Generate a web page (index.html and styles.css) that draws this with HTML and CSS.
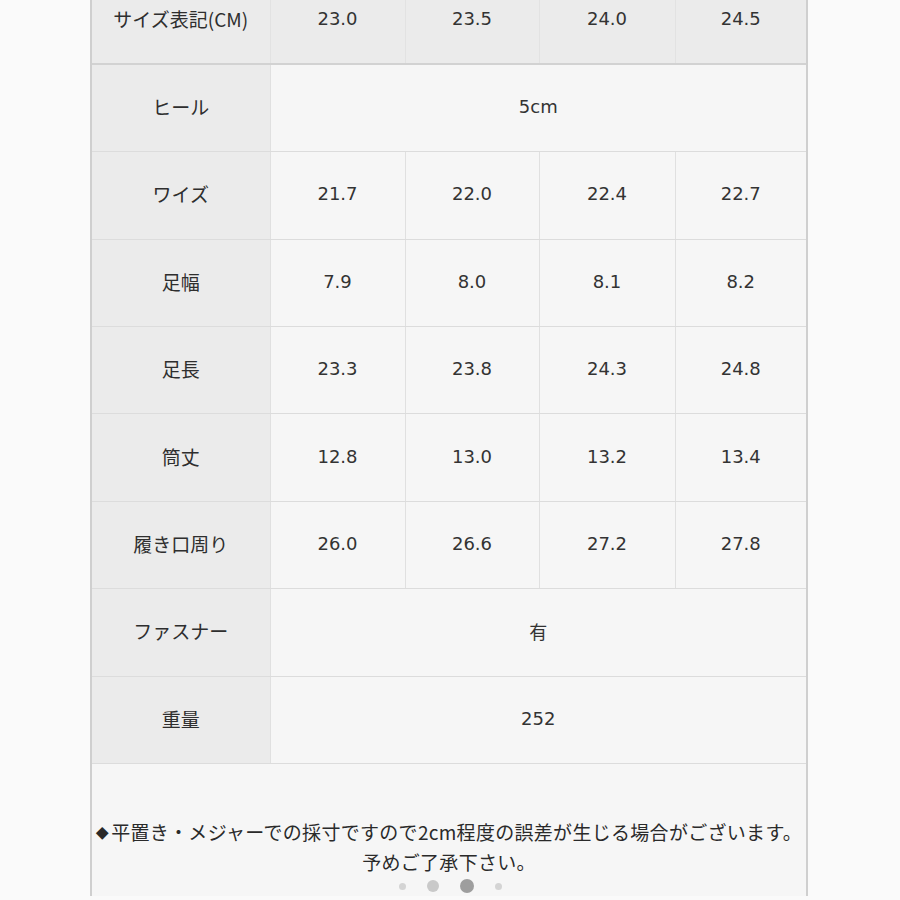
FILE: index.html
```html
<!DOCTYPE html>
<html lang="ja">
<head>
<meta charset="utf-8">
<title>サイズ表</title>
<link rel="stylesheet" href="styles.css">
</head>
<body>
<div class="sheet">
  <table class="spec">
    <colgroup>
      <col class="c-label">
      <col class="c-1"><col class="c-2"><col class="c-3"><col>
    </colgroup>
    <tr class="head">
      <th>サイズ表記(CM)</th>
      <td>23.0</td><td>23.5</td><td>24.0</td><td>24.5</td>
    </tr>
    <tr>
      <th>ヒール</th>
      <td colspan="4">5cm</td>
    </tr>
    <tr>
      <th>ワイズ</th>
      <td>21.7</td><td>22.0</td><td>22.4</td><td>22.7</td>
    </tr>
    <tr>
      <th>足幅</th>
      <td>7.9</td><td>8.0</td><td>8.1</td><td>8.2</td>
    </tr>
    <tr>
      <th>足長</th>
      <td>23.3</td><td>23.8</td><td>24.3</td><td>24.8</td>
    </tr>
    <tr>
      <th>筒丈</th>
      <td>12.8</td><td>13.0</td><td>13.2</td><td>13.4</td>
    </tr>
    <tr>
      <th>履き口周り</th>
      <td>26.0</td><td>26.6</td><td>27.2</td><td>27.8</td>
    </tr>
    <tr>
      <th>ファスナー</th>
      <td colspan="4">有</td>
    </tr>
    <tr>
      <th>重量</th>
      <td colspan="4">252</td>
    </tr>
  </table>
  <div class="note">
    <p class="note-line"><span class="mark">◆</span>平置き・メジャーでの採寸ですので2cm程度の誤差が生じる場合がございます。</p>
    <p class="note-line">予めご了承下さい。</p>
    <div class="dots">
      <span class="dot dot-s"></span>
      <span class="dot dot-m"></span>
      <span class="dot dot-active"></span>
      <span class="dot dot-s"></span>
    </div>
  </div>
</div>
</body>
</html>
```

FILE: styles.css
```css
html, body {
  margin: 0;
  padding: 0;
  background: #fafafa;
  height: 100%;
  overflow: hidden;
}

.sheet {
  box-sizing: border-box;
  margin-left: 90px;
  width: 718px;
  min-height: 100%;
  border-left: 2px solid #cfcfcf;
  border-right: 2px solid #cfcfcf;
  background: #f6f6f6;
  color: #333;
  font-family: "DejaVu Sans", "Noto Sans CJK JP", sans-serif;
}

.spec {
  width: 100%;
  border-collapse: collapse;
  table-layout: fixed;
  margin-top: -23px;
}

.c-label {
  width: 178px;
}

.c-1 {
  width: 135px;
}

.c-2 {
  width: 134px;
}

.c-3 {
  width: 136px;
}

.spec tr {
  height: 87.4px;
}

.spec th,
.spec td {
  padding: 0 0 3px;
  text-align: center;
  vertical-align: middle;
  font-size: 18px;
  font-weight: normal;
  border-bottom: 1px solid #dcdcdc;
  border-left: 1px solid #e0e0e0;
}

.spec th {
  background: #ebebeb;
  border-left: none;
  font-family: "Noto Sans CJK JP", "DejaVu Sans", sans-serif;
  font-size: 19px;
  color: #2e2e2e;
}

.spec td {
  background: #f6f6f6;
}

.spec tr.head th,
.spec tr.head td {
  background: #ebebeb;
  border-bottom: 2px solid #d2d2d2;
  border-left-color: #e2e2e2;
}

.spec tr.head th {
  border-left: none;
}

.note {
  padding-top: 53px;
  text-align: center;
  font-family: "Noto Sans CJK JP", sans-serif;
  font-size: 19px;
  color: #2a2a2a;
}

.note-line {
  margin: 0;
  line-height: 29px;
  white-space: nowrap;
  letter-spacing: 0.3px;
}

.mark {
  font-size: 13px;
  vertical-align: 2px;
  margin-right: 2px;
}

.dots {
  display: flex;
  justify-content: center;
  align-items: center;
  gap: 21px;
  height: 20px;
  padding-left: 2px;
}

.dot {
  display: block;
  border-radius: 50%;
}

.dot-s {
  width: 7px;
  height: 7px;
  background: #d4d4d4;
}

.dot-m {
  width: 12px;
  height: 12px;
  background: #c9c9c9;
}

.dot-active {
  width: 14px;
  height: 14px;
  background: #9e9e9e;
}
```
